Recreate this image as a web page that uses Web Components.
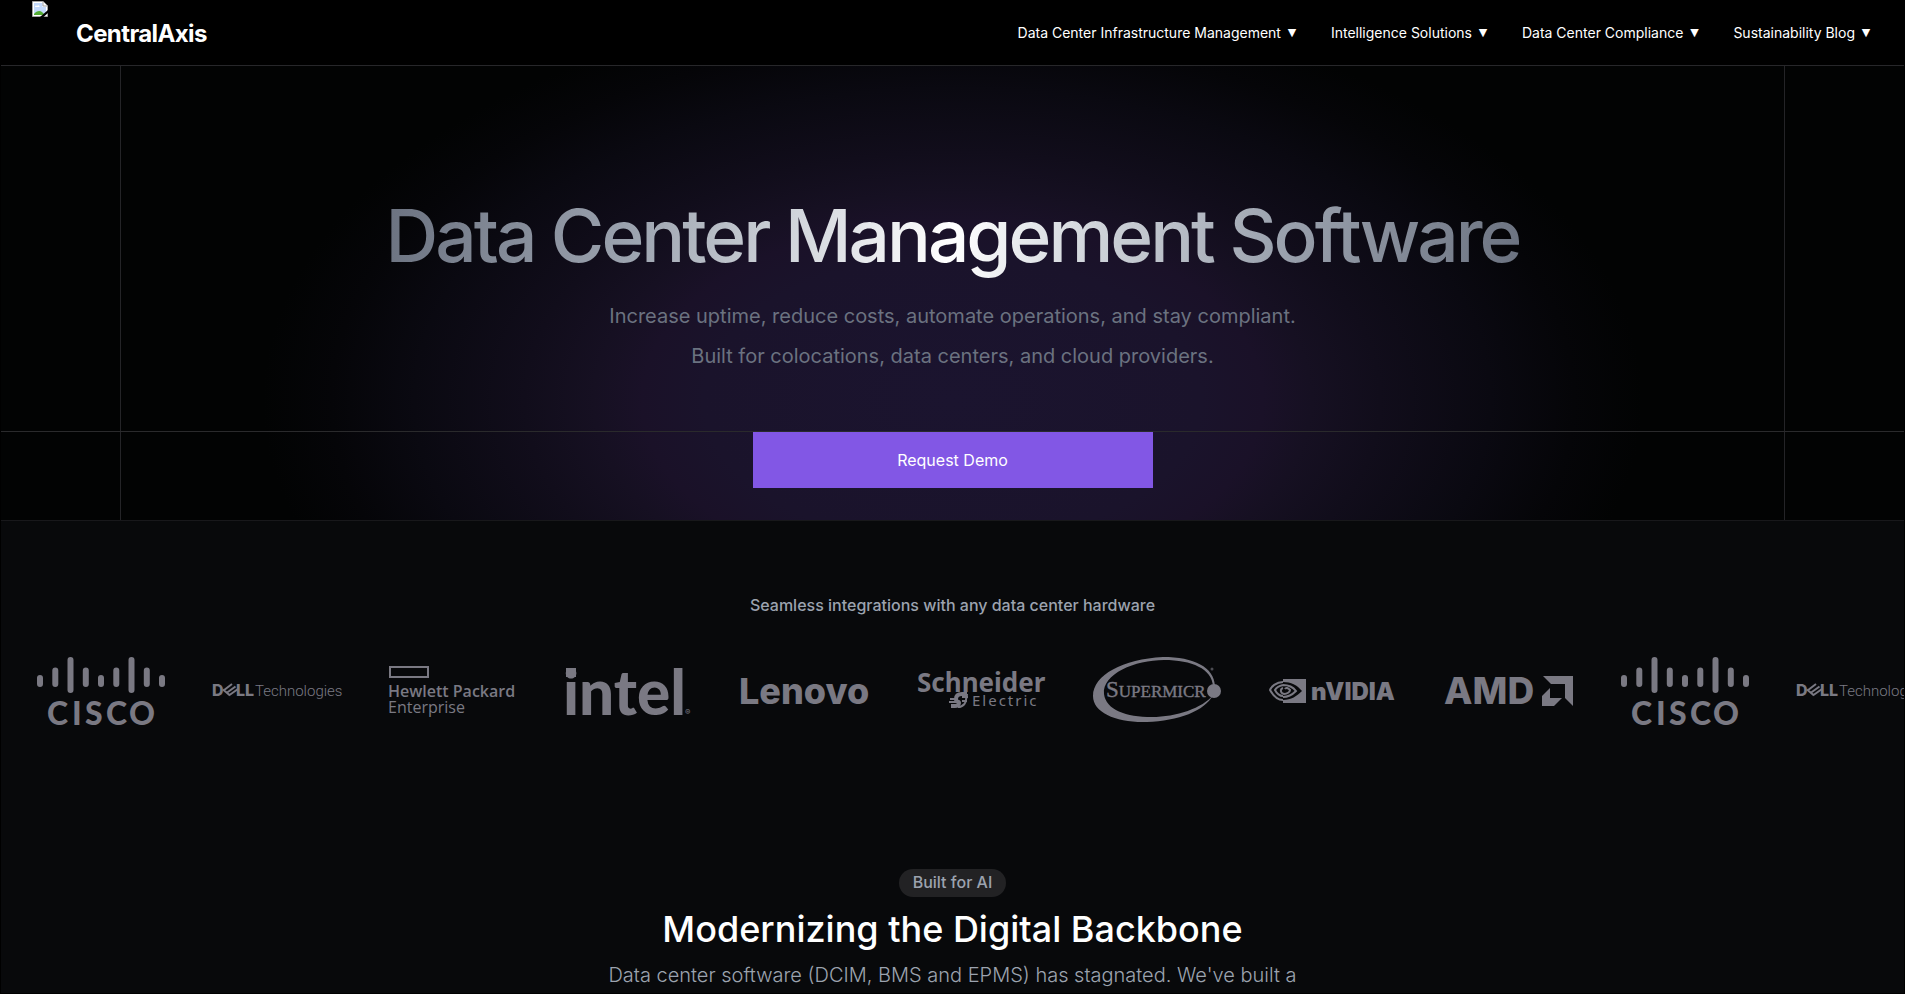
<!DOCTYPE html>
<html lang="en">
<head>
<meta charset="utf-8">
<title>CentralAxis</title>
<style>
html{background:#000}
body{margin:0;font-family:Inter,"Liberation Sans",sans-serif;color:#fff}
</style>
</head>
<body>
<axis-page>
  <axis-header>
    <axis-nav-item>Data Center Infrastructure Management</axis-nav-item>
    <axis-nav-item>Intelligence Solutions</axis-nav-item>
    <axis-nav-item>Data Center Compliance</axis-nav-item>
    <axis-nav-item>Sustainability Blog</axis-nav-item>
  </axis-header>
  <axis-hero>
    <span slot="title">Data Center Management Software</span>
    <span slot="line1">Increase uptime, reduce costs, automate operations, and stay compliant.</span>
    <span slot="line2">Built for colocations, data centers, and cloud providers.</span>
    <span slot="action">Request Demo</span>
  </axis-hero>
  <axis-integrations>Seamless integrations with any data center hardware</axis-integrations>
  <axis-intro>
    <span slot="badge">Built for AI</span>
    <span slot="title">Modernizing the Digital Backbone</span>
    <span>Data center software (DCIM, BMS and EPMS) has stagnated. We've built a</span>
  </axis-intro>
</axis-page>
<script>
const define = (name, html) => {
  const template = document.createElement('template');
  template.innerHTML = html;
  customElements.define(name, class extends HTMLElement {
    constructor() {
      super();
      this.attachShadow({ mode: 'open' }).append(template.content.cloneNode(true));
    }
  });
};

define('axis-page', `
<style>
:host{display:block;box-sizing:border-box;height:100vh;overflow:hidden;border:1px solid #000;background:#08090b}
</style>
<slot></slot>`);

define('axis-nav-item', `
<style>
:host{display:block}
button{all:unset;display:flex;gap:4px;align-items:center;font-size:14px;line-height:20px;color:#fff;cursor:pointer}
.caret{width:14px;text-align:center;font-family:"DejaVu Sans",sans-serif;font-size:11px}
</style>
<button type="button"><span><slot></slot></span><span class="caret">▼</span></button>`);

define('axis-header', `
<style>
:host{display:flex;justify-content:space-between;align-items:center;height:64px;padding:0 31px;background:#000;border-bottom:1px solid #27272a}
.brand{display:flex;height:64px;align-items:center;gap:28px;color:#fff;text-decoration:none;font-size:24px;line-height:32px;font-weight:700;letter-spacing:-.025em}
.brand svg{align-self:flex-start}
.brand span{padding-top:2px}
nav{display:flex;gap:32px}
</style>
<a class="brand" href="#">
  <svg width="16" height="16" viewBox="0 0 16 16" role="img" aria-label="logo">
    <path d="M.5.5H11l4.500 4.500V15.500H.5z" fill="#fff" stroke="#a3a3a3"/>
    <path d="M2 2h8.500v4H14v8H2z" fill="#c3d9fb"/>
    <path d="M3 6c0-1.500 1.500-2 2-1 1-1.500 3-.5 2.500 1z" fill="#fff"/>
    <path d="M2 14v-1c2-3 6-4 8-2l3 3z" fill="#54ac34"/>
    <path d="M8 16l8-7v3l-4.500 4z" fill="#000"/>
    <path d="M11 .5V5h4.500" fill="#fff" stroke="#a3a3a3"/>
  </svg>
  <span>CentralAxis</span>
</a>
<nav><slot></slot></nav>`);

define('axis-hero', `
<style>
:host{display:grid;grid-template:365px 89px / 119px 1fr 119px;border-bottom:1px solid #18181b;
background:radial-gradient(ellipse 690px 400px at 50% 334px,#1b142f 0%,#1a132b 36%,#1a1128 45%,#161022 52%,#110d1b 62%,#0a0911 78%,#050508 90%,#020303 100%)}
.copy{grid-area:1/2;border:solid #242427;border-width:0 1px;text-align:center;display:flex;flex-direction:column;align-items:center}
.action{grid-area:2/1/3/4;display:flex;justify-content:center;align-items:flex-start;border-top:1px solid #2a2a2c}
.foot{grid-area:2/2;border:solid #242427;border-width:0 1px}
h1{margin:134px 0 0;font-size:73px;line-height:72px;font-weight:500;letter-spacing:-3px;padding:0 0 12px;
color:transparent;background:linear-gradient(100deg,#6b7280,#9ca3af 22%,#d1d5db 36%,#fff 50%,#d1d5db 62%,#9ca3af 78%,#6b7280);-webkit-background-clip:text;background-clip:text}
p{margin:12px 0 0;font-size:20px;line-height:40px;color:#6b7280}
p span{display:block}
button{all:unset;width:400px;height:56px;background:#8257e5;color:#fff;font-size:16px;line-height:24px;text-align:center;cursor:pointer}
</style>
<div class="copy">
  <h1><slot name="title"></slot></h1>
  <p><span><slot name="line1"></slot></span><span><slot name="line2"></slot></span></p>
</div>
<div class="foot"></div>
<div class="action"><button type="button"><slot name="action"></slot></button></div>`);

const logos = {
cisco: `
  <g stroke="#7a7983" stroke-width="6" stroke-linecap="round">
    <path d="M3 21v6M18.300 13.500V27M33.500 3v30M48.800 13.500V27M64 21v6M79.300 13.500V27M94.500 3v30M109.800 13.500V27M125 21v6"/>
  </g>
  <text y="68" x="10 35 48 69 92" font-family="Lato" font-weight="900" font-size="32">CISCO</text>`,
dell: `
  <text x="-1" y="39" font-family="Inter" font-weight="800" font-size="16">D</text>
  <path d="M10.500 33.500l8.500-6.500M13.500 36l9-6.500M16.500 38l8.500-6M10 32.500l7 6" fill="none" stroke="#7a7983" stroke-width="2"/>
  <text x="23" y="39" font-family="Inter" font-weight="800" font-size="16">LL</text>
  <text x="42" y="39" font-family="Roboto" font-weight="300" font-size="15">Technologies</text>`,
hpe: `
  <path d="M1 10h38v10H1z" fill="none" stroke="#7a7983" stroke-width="2"/>
  <text x="-1" y="40" font-family="Open Sans" font-weight="600" font-size="16">Hewlett Packard</text>
  <text x="-1" y="56" font-family="Open Sans" font-size="16">Enterprise</text>`,
intel: `
  <text x="-2" y="58" font-family="Lato" font-weight="900" font-size="62">intel</text>
  <path d="M1 11h10v9H1z"/>
  <text x="120" y="58" font-family="Inter" font-size="8">®</text>`,
lenovo: `<text x="-2" y="47" font-family="Inter" font-weight="800" font-size="36">Lenovo</text>`,
schneider: `
  <text x="0" y="35" font-family="Noto Sans" font-weight="700" font-size="26">Schneider</text>
  <path d="M50 37h-5c-4 0-6 2-6 5 0 4 3 1 3 4 0 2-2 3-4 3h-4" fill="none" stroke="#7a7983" stroke-width="4"/>
  <path d="M50 37c0 3-1 4-1 6s-2 7-8 7M51 40h-6M50 44h-5M40 42h-7M39 45h-7" fill="none" stroke="#7a7983" stroke-width="2"/>
  <text x="55" y="49" font-family="Noto Sans" font-size="15" letter-spacing="2">Electric</text>`,
supermicro: `
  <path fill-rule="evenodd" d="M122 29C121 10 101 0 70 0 30 2 0 18 0 39c0 17 24 27 54 26 31-1 58-11 66-27-10 13-37 22-61 22-26 0-46-7-48-23C9 17 42 3 71 3c28 0 48 9 49 26z"/>
  <circle cx="121" cy="34" r="7"/><circle cx="119" cy="12" r="1.500" opacity=".6"/>
  <text x="13" y="40" font-family="Liberation Serif" font-size="23" stroke="#7a7983" stroke-width=".4">S<tspan font-size="17">UPERMICR</tspan></text>`,
nvidia: `
  <path d="M14 22h23v24H14z"/>
  <path d="M14 25C7 25 2 30 1 33c4 7 8 10 13 10" fill="none" stroke="#7a7983" stroke-width="2"/>
  <path d="M14 25c8 0 14 3 19 9-5 5-11 9-19 9z" fill="#08090b"/>
  <path d="M14 28c-4 1-7 3-8 5 2 4 5 6 8 6M14 28c6 0 10 2 13 6-4 4-7 6-13 6M14 31c-3 1-3 5 1 6 3 0 6-2 6-4-2-2-4-3-5-1" fill="none" stroke="#7a7983" stroke-width="2"/>
  <text x="42" y="43" font-family="Inter" font-weight="900" font-size="24">nVIDIA</text>`,
amd: `
  <text x="-1" y="47" font-family="Inter" font-weight="800" font-size="37">AMD</text>
  <path d="M98 19h30v30l-8-8V27h-14z"/><path d="M105 31v10h12l-8 8H97V39z"/>`
};

customElements.define('axis-logo', class extends HTMLElement {
  connectedCallback() {
    const name = this.getAttribute('name');
    this.attachShadow({ mode: 'open' }).innerHTML = `
<style>
:host{display:block;flex:none;width:128px;height:68px}
svg{display:block;overflow:visible;fill:#7a7983}
</style>
<svg width="128" height="68" viewBox="0 0 128 68" role="img" aria-label="${name}">${logos[name]}</svg>`;
  }
});

define('axis-integrations', `
<style>
:host{display:block;padding:72px 0 144px;overflow:hidden}
h2{margin:0 0 40px;font-size:16px;line-height:24px;font-weight:500;text-align:center;color:#9ca3af}
.row{display:flex;gap:48px;padding-left:36px}
</style>
<h2><slot></slot></h2>
<div class="row">${[...Object.keys(logos), 'cisco', 'dell'].map(n => `<axis-logo name="${n}"></axis-logo>`).join('')}</div>`);

define('axis-intro', `
<style>
:host{display:flex;flex-direction:column;align-items:center;text-align:center}
.badge{padding:1px 14px 3px;border-radius:14px;background:#222224;color:#9ca3af;font-size:16px;line-height:24px;font-weight:500}
h2{margin:12px 0 0;font-size:36px;line-height:40px;font-weight:500;color:#fff}
p{margin:12px 0 0;font-size:20px;line-height:28px;font-weight:300;color:#9ca3af}
</style>
<div class="badge"><slot name="badge"></slot></div>
<h2><slot name="title"></slot></h2>
<p><slot></slot></p>`);
</script>
</body>
</html>
